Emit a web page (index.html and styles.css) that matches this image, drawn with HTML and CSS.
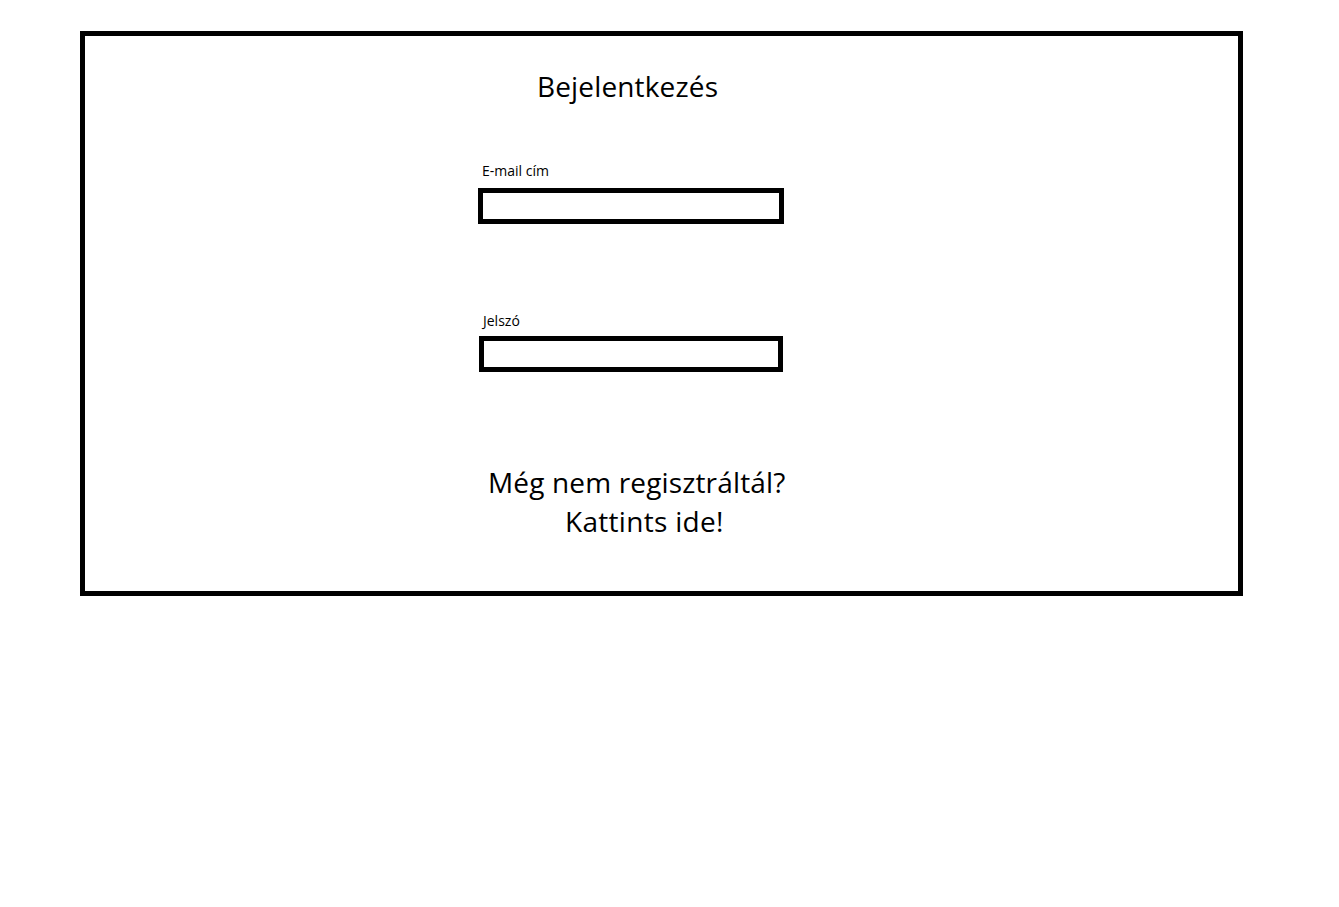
FILE: index.html
```html
<!DOCTYPE html>
<html lang="hu">
<head>
<meta charset="utf-8">
<title>Bejelentkezés</title>
<link rel="stylesheet" href="styles.css">
</head>
<body>
<div class="frame">
  <form class="login">
    <h1 class="title">Bejelentkezés</h1>
    <label class="label label-email" for="email">E-mail cím</label>
    <input class="field field-email" id="email" type="email">
    <label class="label label-pass" for="pass">Jelszó</label>
    <input class="field field-pass" id="pass" type="password">
    <p class="register">
      <span class="reg-line reg-line1">Még nem regisztráltál?</span>
      <a class="reg-line reg-line2" href="#">Kattints ide!</a>
    </p>
  </form>
</div>
</body>
</html>
```
FILE: styles.css
```css
html, body {
  margin: 0;
  padding: 0;
  background: #fff;
}
body {
  font-family: "Open Sans", "Noto Sans", sans-serif;
  color: #000;
}
.frame {
  margin: 31px 0 0 80px;
  width: 1163px;
  height: 565px;
  border: 5px solid #000;
  box-sizing: border-box;
}
.login {
  display: flex;
  flex-direction: column;
  align-items: flex-start;
  margin: 0 0 0 393px;
  padding-top: 33px;
}
.title {
  margin: 0 0 0 59px;
  font-size: 28px;
  line-height: 34px;
  font-weight: 400;
  letter-spacing: 0.15px;
}
.label {
  display: block;
  font-size: 14px;
  line-height: 20px;
}
.label-email {
  margin: 58px 0 0 4px;
}
.label-pass {
  margin: 87px 0 0 5px;
}
.field {
  display: block;
  height: 36px;
  border: 5px solid #000;
  box-sizing: border-box;
  padding: 0;
  margin: 0;
  background: #fff;
  outline: none;
  border-radius: 0;
}
.field-email {
  width: 306px;
  margin-top: 7px;
}
.field-pass {
  width: 304px;
  margin: 5px 0 0 1px;
}
.register {
  margin: 90px 0 0 0;
  display: flex;
  flex-direction: column;
  align-items: flex-start;
  font-size: 28px;
  line-height: 40px;
}
.reg-line {
  display: block;
  color: #000;
  text-decoration: none;
}
.reg-line1 {
  margin-left: 10px;
  letter-spacing: 0.15px;
}
.reg-line2 {
  margin-left: 87px;
  letter-spacing: 0.3px;
  margin-top: -1px;
}
```
